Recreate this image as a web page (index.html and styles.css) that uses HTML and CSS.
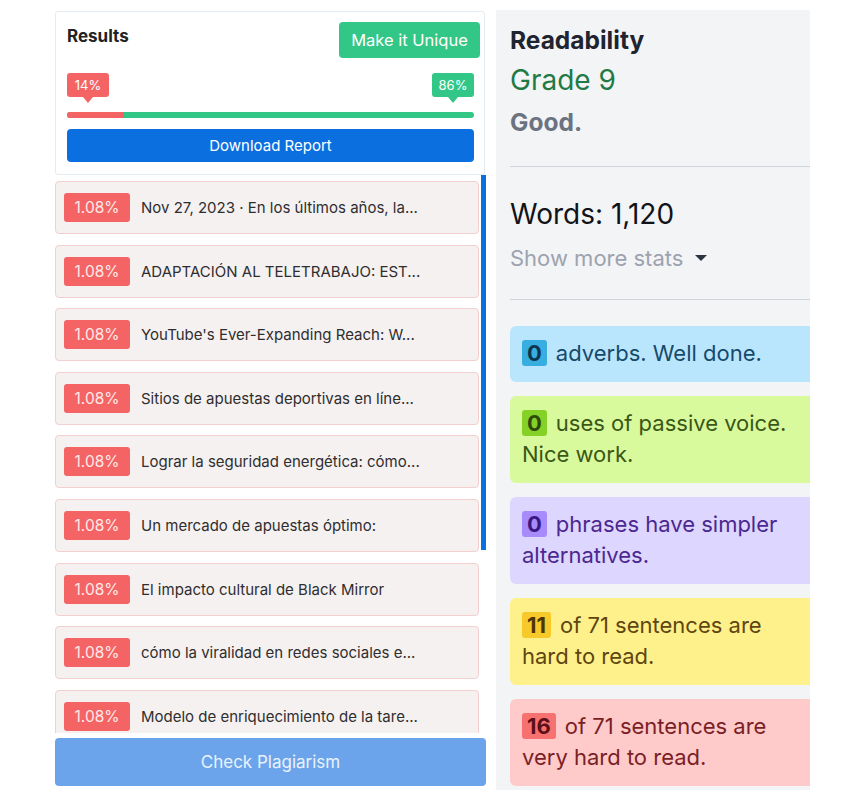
FILE: index.html
```html
<!DOCTYPE html>
<html lang="en">
<head>
<meta charset="utf-8">
<title>Plagiarism results</title>
<link rel="stylesheet" href="styles.css">
</head>
<body>
<div class="page">
  <div class="left">
    <div class="results-card">
      <div class="results-head">
        <h3 class="results-title">Results</h3>
        <button class="btn-unique">Make it Unique</button>
      </div>
      <div class="tips">
        <span class="tip tip-red">14%</span>
        <span class="tip tip-green">86%</span>
      </div>
      <div class="bar"><div class="bar-fill" style="width:14%"></div></div>
      <button class="btn-download">Download Report</button>
    </div>
    <div class="list-wrap">
      <div class="list">
        <div class="item"><span class="pct">1.08%</span><span class="item-text">Nov 27, 2023 · En los últimos años, la...</span></div>
        <div class="item"><span class="pct">1.08%</span><span class="item-text">ADAPTACIÓN AL TELETRABAJO: EST...</span></div>
        <div class="item"><span class="pct">1.08%</span><span class="item-text">YouTube's Ever-Expanding Reach: W...</span></div>
        <div class="item"><span class="pct">1.08%</span><span class="item-text">Sitios de apuestas deportivas en líne...</span></div>
        <div class="item"><span class="pct">1.08%</span><span class="item-text">Lograr la seguridad energética: cómo...</span></div>
        <div class="item"><span class="pct">1.08%</span><span class="item-text">Un mercado de apuestas óptimo:</span></div>
        <div class="item"><span class="pct">1.08%</span><span class="item-text">El impacto cultural de Black Mirror</span></div>
        <div class="item"><span class="pct">1.08%</span><span class="item-text">cómo la viralidad en redes sociales e...</span></div>
        <div class="item"><span class="pct">1.08%</span><span class="item-text">Modelo de enriquecimiento de la tare...</span></div>
      </div>
      <div class="track"><div class="thumb"></div></div>
    </div>
    <button class="btn-check">Check Plagiarism</button>
  </div>

  <div class="panel">
    <div class="panel-inner">
      <h2 class="read-title">Readability</h2>
      <div class="grade">Grade 9</div>
      <div class="good">Good.</div>
      <hr class="divider">
      <div class="words">Words: 1,120</div>
      <div class="more">Show more stats <span class="caret"></span></div>
      <hr class="divider divider-2">
      <div class="hint hint-blue"><span class="num">0</span>adverbs. Well done.</div>
      <div class="hint hint-green"><span class="num">0</span>uses of passive voice. Nice work.</div>
      <div class="hint hint-purple"><span class="num">0</span>phrases have simpler alternatives.</div>
      <div class="hint hint-yellow"><span class="num">11</span>of 71 sentences are hard to read.</div>
      <div class="hint hint-red"><span class="num">16</span>of 71 sentences are very hard to read.</div>
    </div>
  </div>
</div>
</body>
</html>
```

FILE: styles.css
```css
* { box-sizing: border-box; }
html, body { margin: 0; padding: 0; background: #ffffff; }
body { font-family: Inter, "Noto Sans", sans-serif; }

.page {
  display: flex;
  align-items: flex-start;
  padding-left: 55px;
  gap: 10px;
}

/* LEFT */
.left {
  width: 431px;
  display: flex;
  flex-direction: column;
}
.results-card {
  margin-top: 11px;
  width: 430px;
  border: 1px solid #e3ebf3;
  border-radius: 3px;
  padding: 10px 10px 12px 11px;
}
.results-head {
  display: flex;
  justify-content: space-between;
  align-items: flex-start;
  margin-right: -6px;
}
.results-title {
  margin: 0;
  font-size: 17px;
  line-height: 28px;
  font-weight: 700;
  color: #222;
}
.btn-unique {
  font-family: inherit;
  border: 0;
  background: #33c787;
  color: #fff;
  font-size: 16.5px;
  height: 36px;
  width: 141px;
  border-radius: 4px;
  padding: 0;
}
.tips {
  display: flex;
  justify-content: space-between;
  margin-top: 15px;
  height: 30px;
}
.tip {
  position: relative;
  width: 42px;
  height: 24px;
  border-radius: 3px;
  color: #fff;
  font-size: 13px;
  line-height: 24px;
  text-align: center;
}
.tip::after {
  content: "";
  position: absolute;
  left: 50%;
  top: 24px;
  margin-left: -5px;
  border-left: 5px solid transparent;
  border-right: 5px solid transparent;
  border-top: 6px solid currentColor;
}
.tip-red { background: #f46464; }
.tip-red::after { border-top-color: #f46464; }
.tip-green { background: #33c787; }
.tip-green::after { border-top-color: #33c787; }
.bar {
  margin-top: 9px;
  height: 6px;
  border-radius: 3px;
  background: #33c787;
  overflow: hidden;
}
.bar-fill { height: 100%; background: #f46464; }
.btn-download {
  display: block;
  width: 100%;
  margin-top: 11px;
  height: 33px;
  border: 0;
  border-radius: 4px;
  background: #0b6fe0;
  color: #fff;
  font-family: inherit;
  font-size: 15px;
}

.list-wrap {
  display: flex;
  height: 558px;
}
.list {
  flex: 1;
  overflow: hidden;
  padding-top: 6px;
}
.track {
  width: 5px;
  margin-left: 2px;
}
.thumb {
  height: 375px;
  background: #0b6fe0;
}
.item {
  display: flex;
  align-items: center;
  height: 53px;
  margin-bottom: 10.6px;
  border: 1px solid #f3cfcf;
  border-radius: 4px;
  background: #f6f1f1;
  padding-left: 8px;
}
.pct {
  width: 66px;
  height: 29px;
  line-height: 29px;
  text-align: center;
  border-radius: 3px;
  background: #f46464;
  color: #fde9e9;
  font-size: 15.5px;
  flex: none;
}
.item-text {
  margin-left: 11px;
  font-size: 15px;
  color: #2e2e2e;
  white-space: nowrap;
}
.btn-check {
  margin-top: 5px;
  width: 431px;
  height: 48px;
  border: 0;
  border-radius: 4px;
  background: #6ba4ea;
  color: #e9f2fd;
  font-family: inherit;
  font-size: 17px;
}

/* RIGHT */
.panel {
  margin-top: 10px;
  width: 314px;
  height: 780px;
  background: #f3f4f6;
  overflow: hidden;
}
.panel-inner {
  width: 360px;
  padding: 15px 0 0 14px;
}
.read-title {
  margin: 0;
  font-size: 24.5px;
  line-height: 30px;
  font-weight: 700;
  color: #1f2530;
}
.grade {
  margin-top: 7px;
  font-size: 28px;
  line-height: 36px;
  color: #217a45;
}
.good {
  margin-top: 9px;
  font-size: 24.5px;
  line-height: 30px;
  font-weight: 700;
  color: #6b7280;
}
.divider {
  margin: 29px 0 0 0;
  border: 0;
  border-top: 1px solid #d1d5db;
  height: 0;
}
.divider-2 { margin-top: 27px; }
.words {
  margin-top: 29px;
  font-size: 28px;
  line-height: 36px;
  color: #111318;
}
.more {
  margin-top: 12px;
  font-size: 22px;
  line-height: 28px;
  color: #9ca3af;
  display: flex;
  align-items: center;
}
.caret {
  margin-left: 12px;
  width: 0;
  height: 0;
  border-left: 6px solid transparent;
  border-right: 6px solid transparent;
  border-top: 6px solid #2d3340;
}
.hint {
  width: 300px;
  border-radius: 6px 0 0 6px;
  padding: 12px 10px 13px 12px;
  font-size: 22px;
  line-height: 31px;
  margin-bottom: 14px;
}
.divider-2 + .hint { margin-top: 26px; }
.num {
  display: inline-block;
  font-weight: 700;
  line-height: 26px;
  padding: 0 5px;
  margin-right: 9px;
  border-radius: 3px;
}
.hint-blue { background: #bae6fd; color: #164a6b; }
.hint-blue .num { background: #38addf; color: #0e3550; }
.hint-green { background: #d9f99d; color: #3a5716; }
.hint-green .num { background: #86d127; color: #2d4a0c; }
.hint-purple { background: #ddd6fe; color: #4c2790; }
.hint-purple .num { background: #a78bfa; color: #3b1783; }
.hint-yellow { background: #fef08a; color: #5f4610; }
.hint-yellow .num { background: #f7c92a; color: #4d3507; }
.hint-red { background: #fecaca; color: #7a1f26; }
.hint-red .num { background: #f87171; color: #5c1016; }
```
